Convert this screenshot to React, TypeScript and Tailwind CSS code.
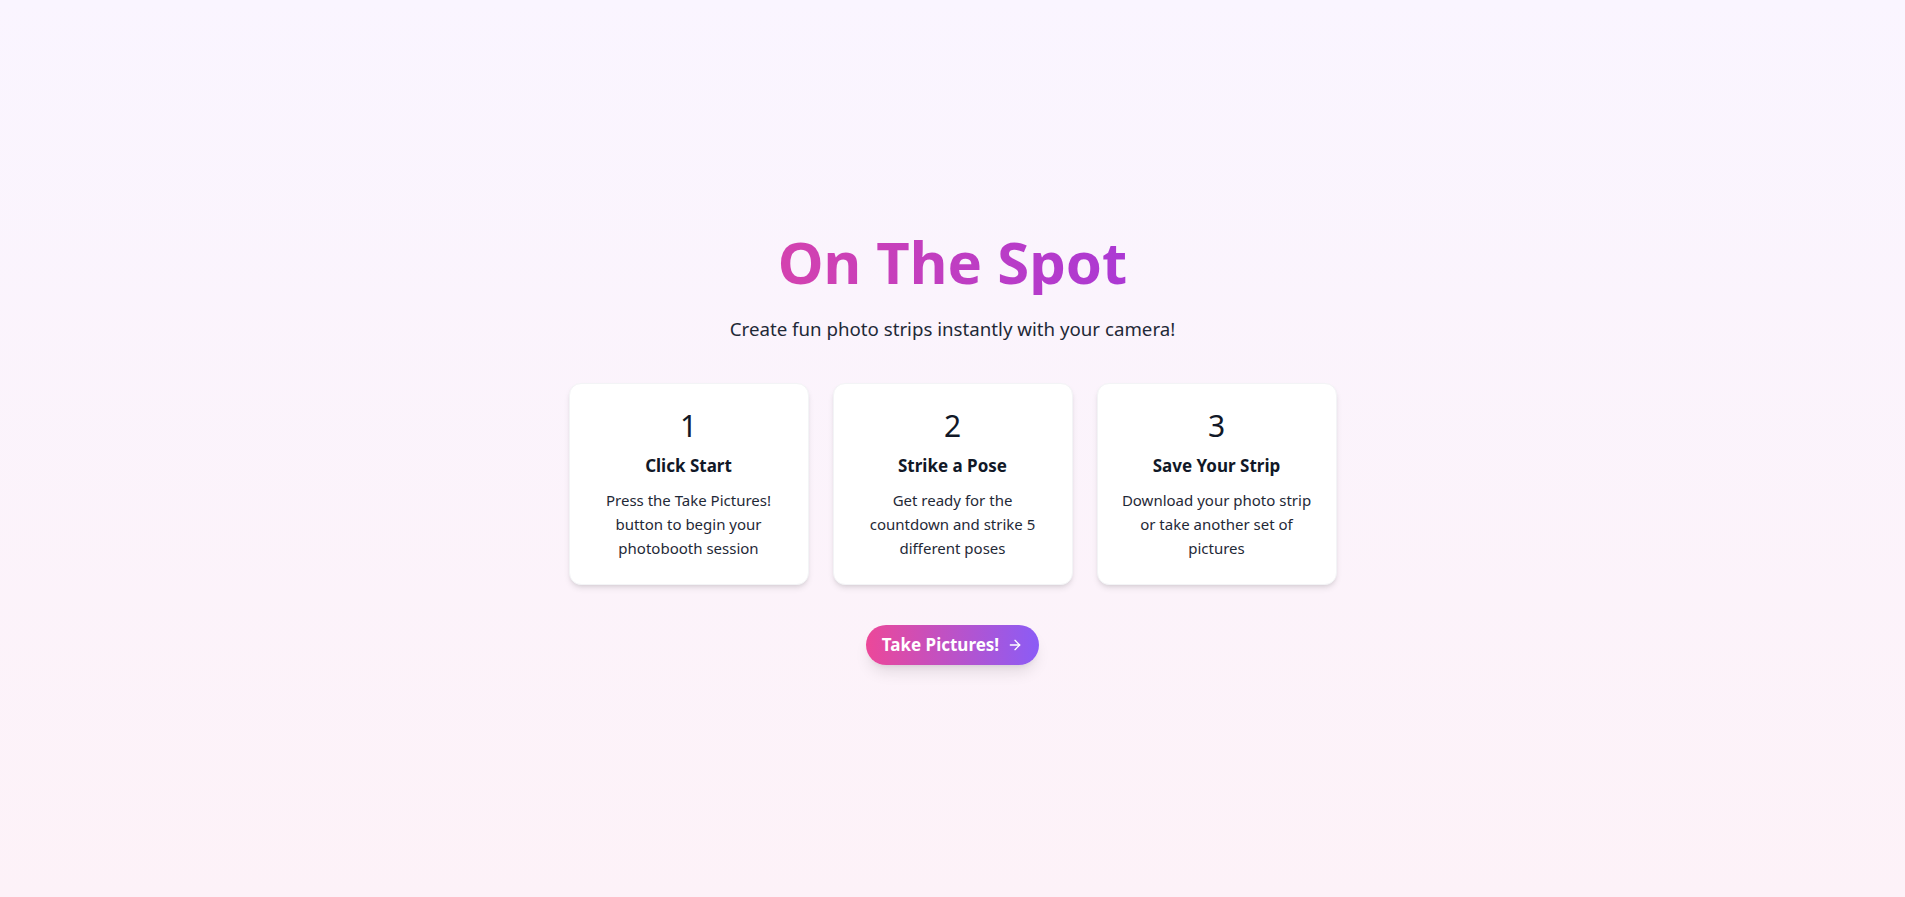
import { ArrowRight } from "lucide-react";

const steps = [
  {
    num: "1",
    title: "Click Start",
    text: "Press the Take Pictures! button to begin your photobooth session",
  },
  {
    num: "2",
    title: "Strike a Pose",
    text: "Get ready for the countdown and strike 5 different poses",
  },
  {
    num: "3",
    title: "Save Your Strip",
    text: "Download your photo strip or take another set of pictures",
  },
];

export default function App() {
  return (
    <main className="min-h-screen flex items-center justify-center bg-linear-to-b/srgb from-[#faf5ff] to-[#fdf2f8] font-['Noto_Sans',sans-serif] text-[#111827]">
      <div className="w-full max-w-3xl flex flex-col items-center text-center">
        <h1 className="w-full text-[58px] font-bold leading-none pt-px pb-1 mb-5 bg-linear-to-r/srgb from-[#ec4899] to-[#9333ea] bg-clip-text text-transparent">
          On The Spot
        </h1>
        <p className="text-[18.7px] leading-7 text-[#1f2937] mb-10">
          Create fun photo strips instantly with your camera!
        </p>

        <div className="grid grid-cols-3 gap-6 w-full mb-10">
          {steps.map((s) => (
            <div
              key={s.num}
              className="bg-white rounded-xl p-6 shadow-md border border-gray-100"
            >
              <div className="text-3xl mb-2">{s.num}</div>
              <h3 className="text-[17px] leading-7 font-bold mb-2">{s.title}</h3>
              <p className="text-[15px] leading-6 text-[#1f2937]">{s.text}</p>
            </div>
          ))}
        </div>

        <button className="flex items-center gap-2 px-4 py-1.5 rounded-full bg-linear-to-r/srgb from-[#ec4899] to-[#8b5cf6] text-white text-[17px] leading-7 font-bold shadow-lg">
          Take Pictures!
          <ArrowRight className="w-4 h-4" />
        </button>
      </div>
    </main>
  );
}
